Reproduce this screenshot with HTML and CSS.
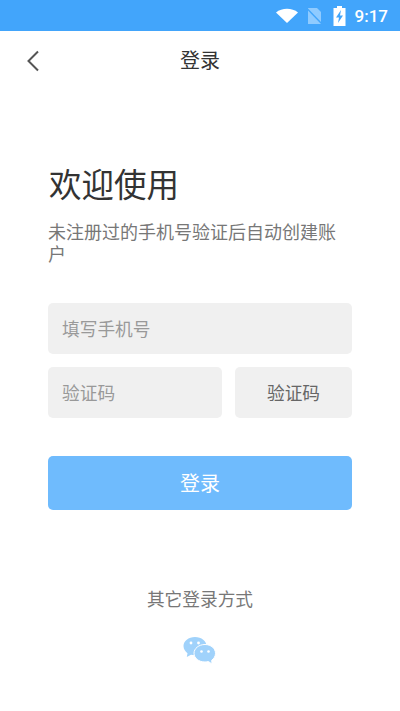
FILE: index.html
```html
<!DOCTYPE html>
<html lang="zh">
<head>
<meta charset="utf-8">
<title>登录</title>
<link rel="stylesheet" href="styles.css">
</head>
<body>
<div class="status">
  <svg class="wifi" width="22" height="15" viewBox="0 0 22 15"><path d="M0 4.500 C6 -0.500 16 -0.500 22 4.500 L11 15 Z" fill="#fff"/></svg>
  <svg class="sim" width="15" height="16" viewBox="0 0 15 16"><path d="M1 0 H10 L14 4 V16 H1 Z" fill="#8fcbff"/><path d="M0.500 1 L14.500 15.500" stroke="#42a5fb" stroke-width="1.400"/></svg>
  <svg class="batt" width="13" height="20" viewBox="0 0 13 20"><path d="M4 0 H9 V2 H12.500 V20 H0.500 V2 H4 Z" fill="#fff"/><path d="M8 4 L3 11.500 H6 L5 17 L10 9.500 H7 Z" fill="#42a5fb"/></svg>
  <span class="time">9:17</span>
</div>
<header class="nav">
  <svg class="back" width="14" height="22" viewBox="0 0 14 22"><path d="M12 1.500 L2.500 11 L12 20.500" fill="none" stroke="#555" stroke-width="2"/></svg>
  <h1 class="nav-title">登录</h1>
</header>
<main class="content">
  <h2 class="welcome">欢迎使用</h2>
  <p class="hint">未注册过的手机号验证后自动创建账户</p>
  <div class="field">填写手机号</div>
  <div class="code-row">
    <div class="field code-input">验证码</div>
    <div class="code-btn">验证码</div>
  </div>
  <div class="login-btn">登录</div>
  <div class="other">其它登录方式</div>
  <svg class="wechat" width="34" height="30" viewBox="0 0 34 30">
    <path d="M12 1 C5.500 1 0.500 5 0.500 10 C0.500 13 2.200 15.500 4.500 17.200 L3.800 21 L8 18.700 C9.300 19 10.600 19.200 12 19.200 C18.500 19.200 23.500 15 23.500 10 C23.500 5 18.500 1 12 1 Z" fill="#a0d2fb"/>
    <path d="M22 8.500 C15.800 8.500 11 12.500 11 17.300 C11 22.100 15.800 26 22 26 C23.200 26 24.300 25.800 25.400 25.500 L29 28 L28.700 24.200 C31 22.600 32.500 20.100 32.500 17.300 C32.500 12.500 28 8.500 22 8.500 Z" fill="#a0d2fb" stroke="#fff" stroke-width="1"/>
    <circle cx="8" cy="7" r="1.400" fill="#fff"/><circle cx="15.500" cy="7" r="1.400" fill="#fff"/>
    <circle cx="18.500" cy="15.500" r="1.300" fill="#fff"/><circle cx="25.500" cy="15.500" r="1.300" fill="#fff"/>
  </svg>
</main>
</body>
</html>
```
FILE: styles.css
```css
* { box-sizing: border-box; }
html, body { margin: 0; padding: 0; }
body {
  width: 400px;
  height: 711px;
  overflow: hidden;
  background: #fff;
  font-family: "Noto Sans CJK SC", "Roboto", sans-serif;
}
.status {
  height: 31px;
  background: #42a5fb;
  display: flex;
  align-items: center;
  justify-content: flex-end;
  padding-right: 12px;
}
.wifi { margin-right: 9px; }
.sim { margin-right: 11px; }
.batt { margin-right: 9px; }
.time {
  font-family: "Roboto", sans-serif;
  font-size: 17px;
  font-weight: 500;
  color: #fff;
}
.nav {
  height: 60px;
  position: relative;
  display: flex;
  align-items: center;
  justify-content: center;
}
.back { position: absolute; left: 26px; top: 19px; }
.nav-title {
  margin: 0;
  font-size: 20px;
  font-weight: 400;
  color: #333;
  line-height: 58px;
  height: 60px;
}
.content {
  padding: 0 48px 0 49px;
  display: flex;
  flex-direction: column;
}
.welcome {
  margin: 69px 0 0;
  font-size: 32.500px;
  line-height: 46px;
  font-weight: 400;
  color: #333;
}
.hint {
  margin: 14px 0 1px -1px;
  font-size: 18px;
  line-height: 22px;
  color: #777;
}
.field {
  margin: 38px 0 0 -1px;
  height: 51px;
  background: #f0f0f0;
  border-radius: 5px;
  padding: 0 0 2px 14px;
  display: flex;
  align-items: center;
  font-size: 17.700px;
  color: #999;
}
.code-row {
  margin: 13px 0 0 -1px;
  display: flex;
  gap: 13px;
}
.code-input { margin: 0; width: 174px; }
.code-btn {
  flex: 1;
  height: 51px;
  background: #f0f0f0;
  border-radius: 5px;
  padding-bottom: 2px;
  display: flex;
  align-items: center;
  justify-content: center;
  font-size: 17.700px;
  color: #666;
}
.login-btn {
  margin: 38px 0 0 -1px;
  height: 54px;
  background: #6fbbfd;
  border-radius: 5px;
  padding-bottom: 2px;
  display: flex;
  align-items: center;
  justify-content: center;
  font-size: 20px;
  color: #fff;
}
.other {
  margin: 76px 0 1px -1px;
  text-align: center;
  font-size: 17.700px;
  line-height: 24px;
  color: #777;
}
.wechat {
  align-self: center;
  margin: 25px 0 0 -1px;
}
```
